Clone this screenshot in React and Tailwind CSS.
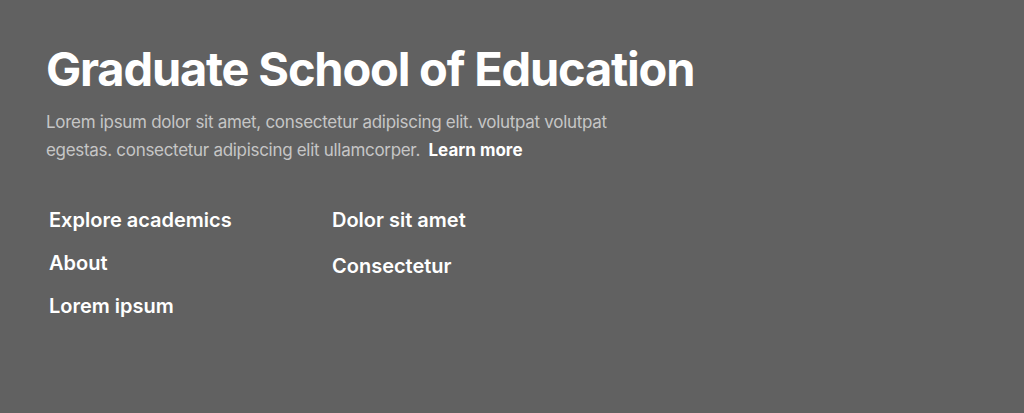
export default function App() {
  return (
    <div className="w-[1024px] h-[413px] bg-[#616161] overflow-hidden">
      <div className="pl-[46px] pt-[40px]">
        <h1 className="text-white font-bold text-[47px] leading-[58px] tracking-[-1.2px] font-['Inter',sans-serif]">
          Graduate School of Education
        </h1>
        <p className="mt-[10px] w-[620px] text-[#c6c6c6] text-[17px] leading-[28px] tracking-[-0.3px] font-['Inter',sans-serif]">
          Lorem ipsum dolor sit amet, consectetur adipiscing elit. volutpat volutpat egestas. consectetur adipiscing elit ullamcorper.{" "}
          <a className="ml-[4px] text-white font-bold tracking-[0px]">Learn more</a>
        </p>
        <div className="mt-[44px] flex pl-[3px] font-['Inter',sans-serif] font-semibold text-white text-[20px]">
          <ul className="w-[283px] flex flex-col gap-[18px]">
            <li className="leading-[25px]">Explore academics</li>
            <li className="leading-[25px]">About</li>
            <li className="leading-[25px]">Lorem ipsum</li>
          </ul>
          <ul className="flex flex-col gap-[21px]">
            <li className="leading-[25px]">Dolor sit amet</li>
            <li className="leading-[25px]">Consectetur</li>
          </ul>
        </div>
      </div>
    </div>
  );
}
